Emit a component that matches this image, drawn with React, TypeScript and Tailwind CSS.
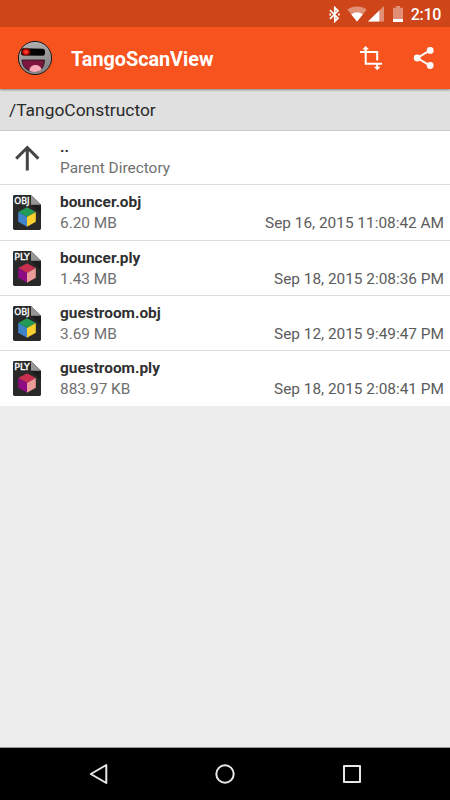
type FileKind = "obj" | "ply";

type FileEntry = {
    name: string;
    size: string;
    modified: string;
    kind: FileKind;
    rowClass: string;
};

const files: FileEntry[] = [
    { name: "bouncer.obj", size: "6.20 MB", modified: "Sep 16, 2015 11:08:42 AM", kind: "obj", rowClass: "h-14 border-b" },
    { name: "bouncer.ply", size: "1.43 MB", modified: "Sep 18, 2015 2:08:36 PM", kind: "ply", rowClass: "h-[55px] border-b" },
    { name: "guestroom.obj", size: "3.69 MB", modified: "Sep 12, 2015 9:49:47 PM", kind: "obj", rowClass: "h-[55px] border-b" },
    { name: "guestroom.ply", size: "883.97 KB", modified: "Sep 18, 2015 2:08:41 PM", kind: "ply", rowClass: "h-[55px]" },
];

const cubeColors = {
    obj: { top: "#239b56", left: "#3f83c8", right: "#fad02e" },
    ply: { top: "#c9304f", left: "#8b0c83", right: "#eb9c98" },
};

function FileIcon({ kind }: { kind: FileKind }) {
    const c = cubeColors[kind];
    return (
        <svg width="28" height="35" viewBox="0 0 28 36" preserveAspectRatio="none" className="shrink-0">
            <path d="M1.5 0H18L28 10V34.5Q28 36 26.5 36H1.5Q0 36 0 34.5V1.5Q0 0 1.5 0Z" fill="#292929" />
            <path d="M18 10H28V20Z" fill="#1c1c1c" />
            <path d="M18 0L28 10H18Z" fill="#969696" />
            <path d="M14 12.5L22.8 17.4L14 22.5L5.2 17.4Z" fill={c.top} />
            <path d="M5.2 17.4L14 22.5V32.7L5.2 27.5Z" fill={c.left} />
            <path d="M22.8 17.4L14 22.5V32.7L22.8 27.5Z" fill={c.right} />
            <text x="1.3" y="9.6" fontSize="9" fill="#fff" stroke="#fff" strokeWidth="0.35" textLength="15.4" lengthAdjust="spacingAndGlyphs" fontFamily="'DejaVu Sans', sans-serif">
                {kind.toUpperCase()}
            </text>
        </svg>
    );
}

function AppLogo() {
    return (
        <svg width="36" height="36" viewBox="0 0 36 36" className="shrink-0">
            <defs>
                <linearGradient id="face" x1="0" y1="0" x2="0.3" y2="1">
                    <stop offset="0" stopColor="#b5b5b5" />
                    <stop offset="1" stopColor="#858585" />
                </linearGradient>
                <radialGradient id="eye">
                    <stop offset="0" stopColor="#ff5a48" />
                    <stop offset="0.45" stopColor="#e01008" />
                    <stop offset="1" stopColor="#500000" stopOpacity="0" />
                </radialGradient>
                <clipPath id="mouth">
                    <path d="M6 20.5H29C29 27 24.5 32 17.5 32C10.5 32 6 27 6 20.5Z" />
                </clipPath>
            </defs>
            <circle cx="18" cy="18" r="16.6" fill="url(#face)" stroke="#181818" strokeWidth="1" />
            <path d="M4.5 9Q5 8.2 6.5 8.2L26 8.7Q28 8.9 28 11V13.5Q28 15.8 25.5 15.8L7 15.5Q4.5 15.5 4 14Z" fill="#050505" />
            <ellipse cx="9" cy="12" rx="5.8" ry="4.8" fill="url(#eye)" />
            <path d="M5 20H27.5C27.5 27 24 31.5 17.5 31.5C10 31.5 5.5 27 5 20Z" fill="#7c183f" stroke="#201018" strokeWidth="0.8" />
            <ellipse cx="18.5" cy="29.8" rx="6" ry="4.8" fill="#f9aabb" clipPath="url(#mouth)" />
        </svg>
    );
}

function StatusBar() {
    return (
        <div className="flex h-[27px] items-center justify-end bg-[#cd4519] pt-px pr-[9px] text-white">
            <svg width="11" height="17" viewBox="0 0 11 17" className="mr-[7px]" fill="none" stroke="currentColor" strokeWidth="1.7">
                <path d="M1 4.2L9 12.2L5.8 15.4V1.6L9 4.8L1 12.8" />
                <path d="M1.2 7.5V9.5M10 7.5V9.5" />
            </svg>
            <svg width="20" height="16" viewBox="0 0 20 16" className="mr-px">
                <path d="M10 15.5L0.3 3.6Q4.5 0.5 10 0.5T19.7 3.6Z" fill="#fff" fillOpacity="0.4" />
                <path d="M10 15.5L4.2 8.4Q6.8 6.3 10 6.3T15.8 8.4Z" fill="#fff" />
            </svg>
            <svg width="16" height="16" viewBox="0 0 16 16" className="mr-[9px]">
                <path d="M16 0V15.5H0Z" fill="#fff" fillOpacity="0.4" />
                <path d="M11.3 4.5V15.5H0Z" fill="#fff" />
            </svg>
            <svg width="10" height="16" viewBox="0 0 10 16" className="mr-[8px]">
                <path d="M3 0H7V1.7H10V16H0V1.7H3Z" fill="#fff" fillOpacity="0.4" />
                <path d="M0 13H10V16H0Z" fill="#fff" />
            </svg>
            <span className="pt-px text-base leading-none font-medium tracking-[-0.3px]">2:10</span>
        </div>
    );
}

function AppBar() {
    return (
        <header className="relative flex h-[62px] items-center bg-[#f7531e] pr-[15px] pl-[17px] text-white shadow-[0_1px_2px_rgba(0,0,0,0.4)]">
            <AppLogo />
            <h1 className="ml-[18px] flex-1 pt-[3px] text-[19.8px] font-bold">TangoScanView</h1>
            <svg width="24" height="26" viewBox="0 0 24 26" className="mr-[30px]" fill="none" stroke="currentColor" strokeWidth="2">
                <path d="M6.7 3V18.8H23M1 7H18.2V15.5M18.2 18.8V23" />
                <path d="M3.4 4.4L6.7 1L10 4.4ZM14.9 21.8L18.2 25.2L21.5 21.8Z" fill="currentColor" stroke="none" />
            </svg>
            <svg width="22" height="24" viewBox="0 0 22 24" fill="currentColor">
                <path d="M17 4.3L4.3 12L17 19.7" fill="none" stroke="currentColor" strokeWidth="2" />
                <circle cx="17.2" cy="4.4" r="3.4" />
                <circle cx="4.2" cy="12" r="3.4" />
                <circle cx="17.2" cy="19.5" r="3.4" />
            </svg>
        </header>
    );
}

function FileList() {
    return (
        <main className="flex-1 bg-[#ededed]">
            <div className="flex h-[54px] border-b border-[#dedede] bg-white pl-[14px]">
                <svg width="27" height="27" viewBox="0 0 27 27" className="mt-[14px] shrink-0" fill="none" stroke="#444" strokeWidth="3">
                    <path d="M13.3 25.5V3M2.2 13.6L13.3 2.5L24.4 13.6" />
                </svg>
                <div className="ml-[19px] pt-[6px] text-[15.4px] leading-[21px]">
                    <p className="font-bold text-[#303030]">..</p>
                    <p className="text-[#707070]">Parent Directory</p>
                </div>
            </div>
            {files.map((file) => (
                <div key={file.name} className={`flex border-[#dedede] bg-white pr-[6px] pl-[13px] pt-[7px] text-[15.4px] leading-[21px] ${file.rowClass}`}>
                    <div className="mt-[3px]">
                        <FileIcon kind={file.kind} />
                    </div>
                    <div className="ml-[19px] flex-1">
                        <p className="font-bold text-[#303030]">{file.name}</p>
                        <div className="flex justify-between text-[#707070]">
                            <span>{file.size}</span>
                            <span className="text-[#5c5c5c]">{file.modified}</span>
                        </div>
                    </div>
                </div>
            ))}
        </main>
    );
}

function NavBar() {
    return (
        <nav className="flex h-[53px] items-center justify-between border-t border-[#999] bg-black pr-[88px] pl-[89px]">
            <svg width="20" height="22" viewBox="0 0 20 22" fill="none" stroke="#e8e8e8" strokeWidth="2" strokeLinejoin="round">
                <path d="M17.3 2V20L1.8 11Z" />
            </svg>
            <svg width="20" height="20" viewBox="0 0 20 20" className="mr-px" fill="none" stroke="#e8e8e8" strokeWidth="2">
                <circle cx="10" cy="10" r="8.7" />
            </svg>
            <svg width="20" height="20" viewBox="0 0 20 20" fill="none" stroke="#e8e8e8" strokeWidth="2" strokeLinejoin="round">
                <rect x="2" y="2" width="16" height="16" />
            </svg>
        </nav>
    );
}

export default function App() {
    return (
        <div className="flex h-[800px] w-[450px] flex-col overflow-hidden font-[Roboto,sans-serif]">
            <StatusBar />
            <AppBar />
            <div className="h-[42px] border-b border-[#c8c8c8] bg-[#e0e0e0] pl-[9px] text-[17.4px] leading-[43px] text-[#2a2a2a]">
                /TangoConstructor
            </div>
            <FileList />
            <NavBar />
        </div>
    );
}
